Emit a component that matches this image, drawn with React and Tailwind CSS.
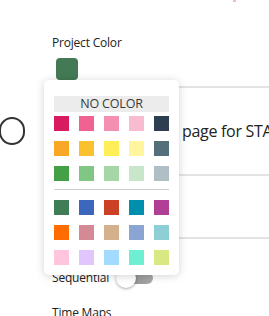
import React from 'react';

// swatch palette, two groups split by a divider
const topColors = [
  ['#d81b60', '#f06292', '#f48fb1', '#f8bbd0', '#2c3e50'],
  ['#f9a825', '#fbc02d', '#ffee58', '#fff59d', '#546e7a'],
  ['#43a047', '#81c784', '#a5d6a7', '#c8e6c9', '#b0bec5'],
];

const bottomColors = [
  ['#3e7d55', '#3c67bd', '#cb4127', '#008fac', '#b03f95'],
  ['#ff6d00', '#d48a95', '#d4b08c', '#8ba5d3', '#8dcfd4'],
  ['#ffc5dc', '#e1c6fd', '#a2dbfd', '#6eefd2', '#d9e882'],
];

const SwatchGrid = ({ rows }) => (
  <div className="grid grid-cols-5 gap-[10px]">
    {rows.flat().map((c, i) => (
      <button key={i} type="button" className="w-[15px] h-[15px]" style={{ backgroundColor: c }} />
    ))}
  </div>
);

const ColorPopup = () => (
  <div className="absolute left-[44px] top-[80px] w-[135px] bg-white rounded-[5px] shadow-[0_1px_8px_rgba(0,0,0,0.18)] px-[10px] pt-[16px] pb-[10px] z-10">
    <div className="h-[16px] bg-[#ececec] flex items-center justify-center text-[12.5px] leading-none text-[#3a3a3a] mb-[4px] tracking-[-0.2px]">
      NO COLOR
    </div>
    <SwatchGrid rows={topColors} />
    <div className="h-px bg-[#cfcfcf] mt-[8px] mb-[10px]" />
    <SwatchGrid rows={bottomColors} />
  </div>
);

export default function App() {
  return (
    <div className="relative w-[269px] h-[316px] overflow-hidden bg-white text-[#222]" style={{ fontFamily: '"Open Sans", "Noto Sans", sans-serif' }}>
      {/* sliver of something pink above the fold */}
      <div className="absolute left-[233px] top-0 w-[3px] h-[2px] bg-[#f5b8c4]" />

      <div className="pl-[52px] pt-[35px]">
        <div className="text-[12px] leading-[16px] tracking-[-0.2px]">Project Color</div>
        <div className="mt-[7px] ml-[4px] w-[22px] h-[22px] rounded-[4px] bg-[#437a55]" />
      </div>

      <div className="mt-[6px] ml-[52px] h-[2px] bg-[#e3e3e3]" />
      <div className="h-[86px] flex items-center -ml-px overflow-hidden">
        <div className="shrink-0 w-[26px] h-[28px] rounded-full border-2 border-[#333]" />
        <div className="shrink-0 ml-[157px] text-[16px] whitespace-nowrap text-[#222] tracking-[-0.3px]">page for STAR</div>
      </div>
      <div className="ml-[52px] h-[2px] bg-[#e3e3e3]" />
      <div className="h-[61px]" />
      <div className="ml-[52px] h-[2px] bg-[#e3e3e3]" />

      <div className="pl-[52px] mt-[31px] flex items-center">
        <div className="text-[12px] leading-[16px] w-[65px] tracking-[-0.2px]">Sequential</div>
        <div className="relative w-[36px] h-[12px] rounded-full bg-gradient-to-r from-[#8a8a8a] to-[#a8a8a8]">
          <div className="absolute -left-px -top-[4px] w-[20px] h-[20px] rounded-full bg-white shadow-[0_1px_3px_rgba(0,0,0,0.35)]" />
        </div>
      </div>
      <div className="pl-[52px] mt-[19px] text-[12px] leading-[16px] tracking-[-0.2px]">Time Maps</div>

      <ColorPopup />
    </div>
  );
}
